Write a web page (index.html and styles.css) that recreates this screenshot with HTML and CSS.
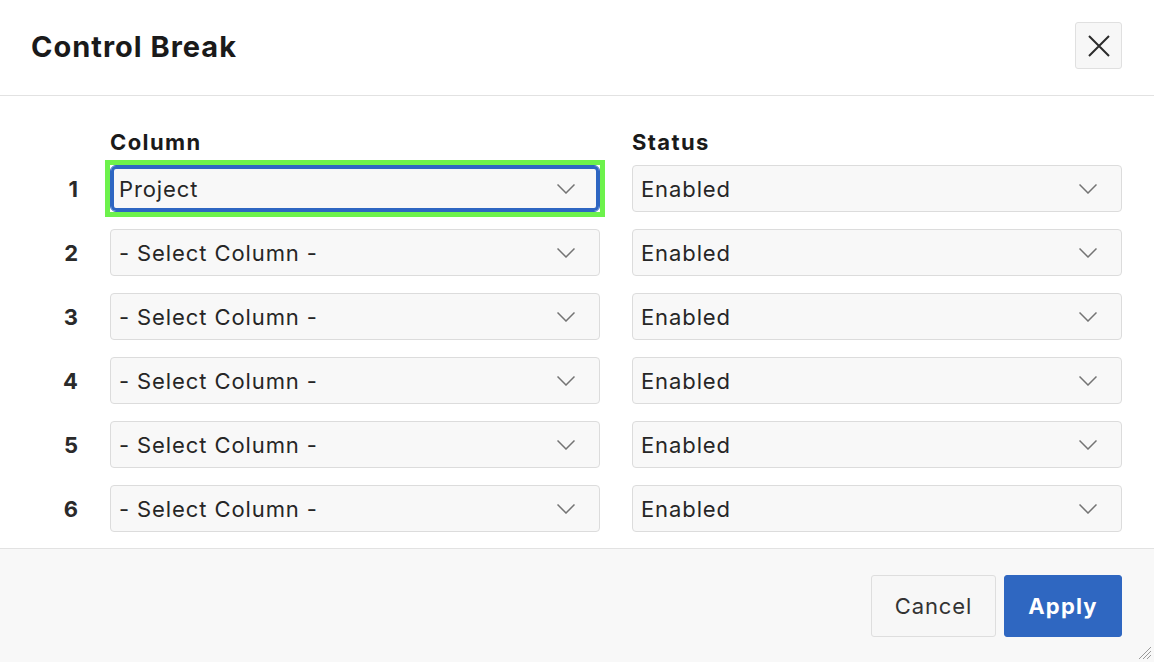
FILE: index.html
```html
<!DOCTYPE html>
<html lang="en">
<head>
<meta charset="utf-8">
<title>Control Break</title>
<link rel="stylesheet" href="styles.css">
</head>
<body>
<div class="dialog">
  <header class="dlg-header">
    <h1 class="dlg-title">Control Break</h1>
    <button class="close-btn" type="button" aria-label="Close">
      <svg width="22" height="22" viewBox="0 0 22 22"><path d="M1 1 L21 21 M21 1 L1 21" stroke="#2b2b2b" stroke-width="2" fill="none"/></svg>
    </button>
  </header>

  <main class="dlg-body">
    <div class="grid head-row">
      <span></span>
      <span class="col-label">Column</span>
      <span class="col-label">Status</span>
    </div>

    <div class="grid rows">
      <span class="num">1</span>
      <div class="field highlight"><div class="select focused"><span>Project</span><svg class="chev" width="18" height="10" viewBox="0 0 18 10"><path d="M0.5 0.5 L9 9 L17.5 0.5" stroke="#747474" stroke-width="1.5" fill="none"/></svg></div></div>
      <div class="field"><div class="select"><span>Enabled</span><svg class="chev" width="18" height="10" viewBox="0 0 18 10"><path d="M0.5 0.5 L9 9 L17.5 0.5" stroke="#747474" stroke-width="1.5" fill="none"/></svg></div></div>

      <span class="num">2</span>
      <div class="field"><div class="select"><span>- Select Column -</span><svg class="chev" width="18" height="10" viewBox="0 0 18 10"><path d="M0.5 0.5 L9 9 L17.5 0.5" stroke="#747474" stroke-width="1.5" fill="none"/></svg></div></div>
      <div class="field"><div class="select"><span>Enabled</span><svg class="chev" width="18" height="10" viewBox="0 0 18 10"><path d="M0.5 0.5 L9 9 L17.5 0.5" stroke="#747474" stroke-width="1.5" fill="none"/></svg></div></div>

      <span class="num">3</span>
      <div class="field"><div class="select"><span>- Select Column -</span><svg class="chev" width="18" height="10" viewBox="0 0 18 10"><path d="M0.5 0.5 L9 9 L17.5 0.5" stroke="#747474" stroke-width="1.5" fill="none"/></svg></div></div>
      <div class="field"><div class="select"><span>Enabled</span><svg class="chev" width="18" height="10" viewBox="0 0 18 10"><path d="M0.5 0.5 L9 9 L17.5 0.5" stroke="#747474" stroke-width="1.5" fill="none"/></svg></div></div>

      <span class="num">4</span>
      <div class="field"><div class="select"><span>- Select Column -</span><svg class="chev" width="18" height="10" viewBox="0 0 18 10"><path d="M0.5 0.5 L9 9 L17.5 0.5" stroke="#747474" stroke-width="1.5" fill="none"/></svg></div></div>
      <div class="field"><div class="select"><span>Enabled</span><svg class="chev" width="18" height="10" viewBox="0 0 18 10"><path d="M0.5 0.5 L9 9 L17.5 0.5" stroke="#747474" stroke-width="1.5" fill="none"/></svg></div></div>

      <span class="num">5</span>
      <div class="field"><div class="select"><span>- Select Column -</span><svg class="chev" width="18" height="10" viewBox="0 0 18 10"><path d="M0.5 0.5 L9 9 L17.5 0.5" stroke="#747474" stroke-width="1.5" fill="none"/></svg></div></div>
      <div class="field"><div class="select"><span>Enabled</span><svg class="chev" width="18" height="10" viewBox="0 0 18 10"><path d="M0.5 0.5 L9 9 L17.5 0.5" stroke="#747474" stroke-width="1.5" fill="none"/></svg></div></div>

      <span class="num">6</span>
      <div class="field"><div class="select"><span>- Select Column -</span><svg class="chev" width="18" height="10" viewBox="0 0 18 10"><path d="M0.5 0.5 L9 9 L17.5 0.5" stroke="#747474" stroke-width="1.5" fill="none"/></svg></div></div>
      <div class="field"><div class="select"><span>Enabled</span><svg class="chev" width="18" height="10" viewBox="0 0 18 10"><path d="M0.5 0.5 L9 9 L17.5 0.5" stroke="#747474" stroke-width="1.5" fill="none"/></svg></div></div>
    </div>
  </main>

  <footer class="dlg-footer">
    <button class="btn btn-cancel" type="button">Cancel</button>
    <button class="btn btn-apply" type="button">Apply</button>
    <svg class="grip" width="18" height="18" viewBox="0 0 18 18"><path d="M17 5 L5 17 M17 9 L9 17 M17 13 L13 17" stroke="#9a9a9a" stroke-width="1" fill="none"/></svg>
  </footer>
</div>
</body>
</html>
```

FILE: styles.css
```css
* { box-sizing: border-box; }

html, body {
  margin: 0;
  padding: 0;
  background: #ffffff;
}

body {
  font-family: Inter, "Noto Sans", "Liberation Sans", sans-serif;
  color: #262626;
}

.dialog {
  width: 1154px;
  height: 662px;
  display: flex;
  flex-direction: column;
  overflow: hidden;
}

.dlg-header {
  height: 96px;
  flex: none;
  display: flex;
  align-items: flex-start;
  justify-content: space-between;
  padding: 22px 32px 0 31px;
  border-bottom: 1px solid #e2e2e2;
}

.dlg-title {
  margin: 0;
  font-size: 29px;
  font-weight: 700;
  line-height: 50px;
  color: #1a1a1a;
  letter-spacing: 1px;
}

.close-btn {
  width: 47px;
  height: 47px;
  margin: 0;
  padding: 0;
  display: flex;
  align-items: center;
  justify-content: center;
  background: #f7f7f7;
  border: 1px solid #e0e0e0;
  border-radius: 3px;
}

.dlg-body {
  padding: 33px 32px 16px 32px;
}

.grid {
  display: grid;
  grid-template-columns: 46px 490px 490px;
  column-gap: 32px;
}

.head-row {
  margin-bottom: 9px;
}

.col-label {
  font-size: 22px;
  font-weight: 700;
  line-height: 27px;
  color: #1a1a1a;
  letter-spacing: 1.4px;
}

.rows {
  row-gap: 17px;
  align-items: center;
}

.num {
  text-align: right;
  font-size: 22px;
  font-weight: 700;
  color: #2a2a2a;
}

.field {
  height: 47px;
}

.field.highlight {
  outline: 5px solid #6df24c;
}

.select {
  height: 47px;
  display: flex;
  align-items: center;
  justify-content: space-between;
  padding: 0 24px 0 8px;
  background: #f8f8f8;
  border: 1px solid #dcdcdc;
  border-radius: 4px;
  font-size: 22px;
  letter-spacing: 0.9px;
  color: #262626;
}

.select.focused {
  border-color: #2e66c2;
  box-shadow: inset 0 0 0 3px #2e66c2;
  border-radius: 6px;
}

.chev {
  flex: none;
}

.dlg-footer {
  flex: 1;
  position: relative;
  display: flex;
  justify-content: flex-end;
  align-items: flex-start;
  gap: 8px;
  padding: 26px 32px 0 0;
  background: #f8f8f8;
  border-top: 1px solid #e2e2e2;
}

.btn {
  height: 62px;
  margin: 0;
  padding: 0;
  font-family: inherit;
  font-size: 22px;
  border-radius: 3px;
}

.btn-cancel {
  width: 125px;
  background: #f7f7f7;
  border: 1px solid #dedede;
  color: #333333;
  font-weight: 400;
  letter-spacing: 0.9px;
}

.btn-apply {
  width: 118px;
  background: #2f67c1;
  border: 1px solid #2f67c1;
  color: #ffffff;
  font-weight: 700;
  letter-spacing: 1.2px;
}

.grip {
  position: absolute;
  right: 2px;
  bottom: 2px;
}
```
